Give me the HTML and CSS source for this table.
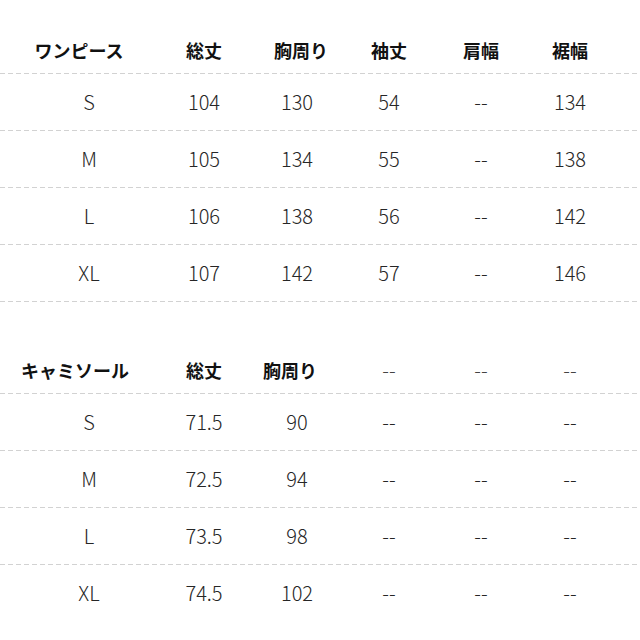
FILE: index.html
```html
<!DOCTYPE html>
<html lang="ja">
<head>
<meta charset="utf-8">
<title>サイズ表</title>
<link rel="stylesheet" href="styles.css">
</head>
<body>
<section class="table t1">
  <div class="row head">
    <span>ワンピース</span><span>総丈</span><span class="sh-r">胸周り</span><span>袖丈</span><span>肩幅</span><span>裾幅</span>
  </div>
  <div class="row"><span class="size">S</span><span>104</span><span>130</span><span>54</span><span>--</span><span>134</span></div>
  <div class="row"><span class="size">M</span><span>105</span><span>134</span><span>55</span><span>--</span><span>138</span></div>
  <div class="row"><span class="size">L</span><span>106</span><span>138</span><span>56</span><span>--</span><span>142</span></div>
  <div class="row"><span class="size">XL</span><span>107</span><span>142</span><span>57</span><span>--</span><span>146</span></div>
</section>
<section class="table t2">
  <div class="row head">
    <span class="sh-l2">キャミソール</span><span>総丈</span><span class="sh-l">胸周り</span><span class="dash">--</span><span class="dash">--</span><span class="dash">--</span>
  </div>
  <div class="row"><span class="size">S</span><span>71.5</span><span>90</span><span>--</span><span>--</span><span>--</span></div>
  <div class="row"><span class="size">M</span><span>72.5</span><span>94</span><span>--</span><span>--</span><span>--</span></div>
  <div class="row"><span class="size">L</span><span>73.5</span><span>98</span><span>--</span><span>--</span><span>--</span></div>
  <div class="row last"><span class="size">XL</span><span>74.5</span><span>102</span><span>--</span><span>--</span><span>--</span></div>
</section>
</body>
</html>
```

FILE: styles.css
```css
html, body {
  margin: 0;
  padding: 0;
  background: #ffffff;
}

body {
  width: 640px;
  height: 640px;
  overflow: hidden;
  font-family: "Noto Sans CJK JP", "Noto Sans", sans-serif;
  color: #222222;
}

.table {
  display: flex;
  flex-direction: column;
}

.t1 {
  padding-top: 27px;
}

.t2 {
  padding-top: 45px;
}

.row {
  display: grid;
  grid-template-columns: 158px 92px 94px 90px 94px 84px 28px;
  align-items: center;
  height: 57px;
  background-image: repeating-linear-gradient(to right, #d2d2d2 0 5px, transparent 5px 8px);
  background-size: 100% 1px;
  background-position: left bottom;
  background-repeat: no-repeat;
  box-sizing: border-box;
  padding-bottom: 1px;
}

.row.head {
  height: 47px;
}

.row.last {
  background-image: none;
}

.row span {
  text-align: center;
  font-size: 20px;
  font-weight: 300;
  line-height: 1;
  color: #262626;
}

.row.head span {
  font-size: 18px;
  font-weight: 700;
  color: #111111;
}

.row.head span.dash {
  font-weight: 300;
  font-size: 20px;
  color: #444444;
}

.row span.size {
  padding-left: 20px;
}

.sh-r {
  padding-left: 8px;
}

.sh-l {
  padding-right: 14px;
}

.sh-l2 {
  padding-right: 8px;
}
```
